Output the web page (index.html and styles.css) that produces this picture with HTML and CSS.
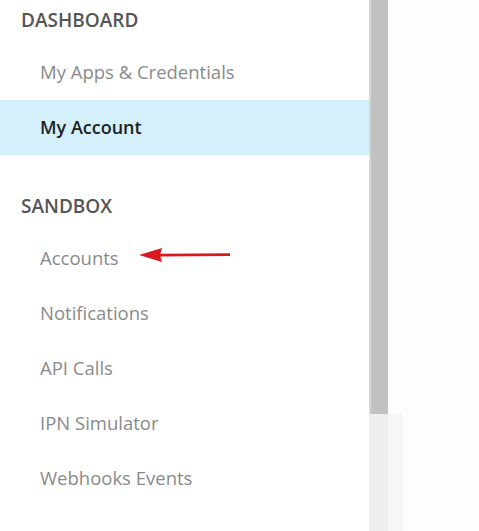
FILE: index.html
```html
<!DOCTYPE html>
<html lang="en">
<head>
<meta charset="utf-8">
<title>Dashboard</title>
<link rel="stylesheet" href="styles.css">
</head>
<body>
<div class="layout">
  <nav class="sidebar">
    <section class="group">
      <h2 class="group-title">DASHBOARD</h2>
      <ul class="menu">
        <li class="menu-item">My Apps &amp; Credentials</li>
        <li class="menu-item is-active">My Account</li>
      </ul>
    </section>
    <section class="group group-sandbox">
      <h2 class="group-title">SANDBOX</h2>
      <ul class="menu">
        <li class="menu-item">
          <span>Accounts</span>
          <svg class="pointer" width="92" height="18" viewBox="0 0 92 18" aria-hidden="true">
            <path d="M20 7.8 L91 7.2 L91 10 L20 10.6 Z" fill="#d61a1f"/>
            <path d="M0 9 L23 2 L21 9 L23 16 Z" fill="#d61a1f"/>
          </svg>
        </li>
        <li class="menu-item">Notifications</li>
        <li class="menu-item">API Calls</li>
        <li class="menu-item">IPN Simulator</li>
        <li class="menu-item">Webhooks Events</li>
      </ul>
    </section>
  </nav>
  <div class="scrollbar">
    <div class="scroll-thumb"></div>
    <div class="scroll-track"></div>
  </div>
  <main class="content"></main>
</div>
</body>
</html>
```

FILE: styles.css
```css
html, body {
  margin: 0;
  padding: 0;
  background: #fdfdfd;
}

body {
  font-family: "Open Sans", "Noto Sans", sans-serif;
  width: 479px;
  height: 531px;
  overflow: hidden;
}

.layout {
  display: flex;
  height: 531px;
}

.sidebar {
  width: 369px;
  flex: none;
  background: #fff;
}

.group-title {
  margin: 0;
  height: 45px;
  line-height: 40px;
  padding-left: 21px;
  font-size: 19px;
  font-weight: 600;
  color: #555;
}

.group-sandbox {
  margin-top: 31px;
}

.menu {
  list-style: none;
  margin: 0;
  padding: 0;
}

.menu-item {
  display: flex;
  align-items: center;
  height: 55px;
  padding-left: 40px;
  padding-bottom: 2px;
  box-sizing: border-box;
  font-size: 18.5px;
  color: #8a8a8a;
}

.menu-item.is-active {
  background: #d3f0fb;
  color: #1e1e1e;
  font-weight: 600;
  font-size: 18px;
}

.pointer {
  margin-left: 20px;
  margin-top: -6px;
}

.scrollbar {
  width: 34px;
  flex: none;
  display: flex;
  flex-direction: column;
}

.scroll-thumb {
  width: 19px;
  height: 414px;
  background: #c1c1c1;
  border-left: 2px solid #d6d6d6;
  box-sizing: border-box;
}

.scroll-track {
  flex: 1;
  background: linear-gradient(to right, #efefef 0, #efefef 19px, #f6f6f6 19px, #f6f6f6 100%);
}

.content {
  flex: 1;
  background: #fdfdfd;
}
```
